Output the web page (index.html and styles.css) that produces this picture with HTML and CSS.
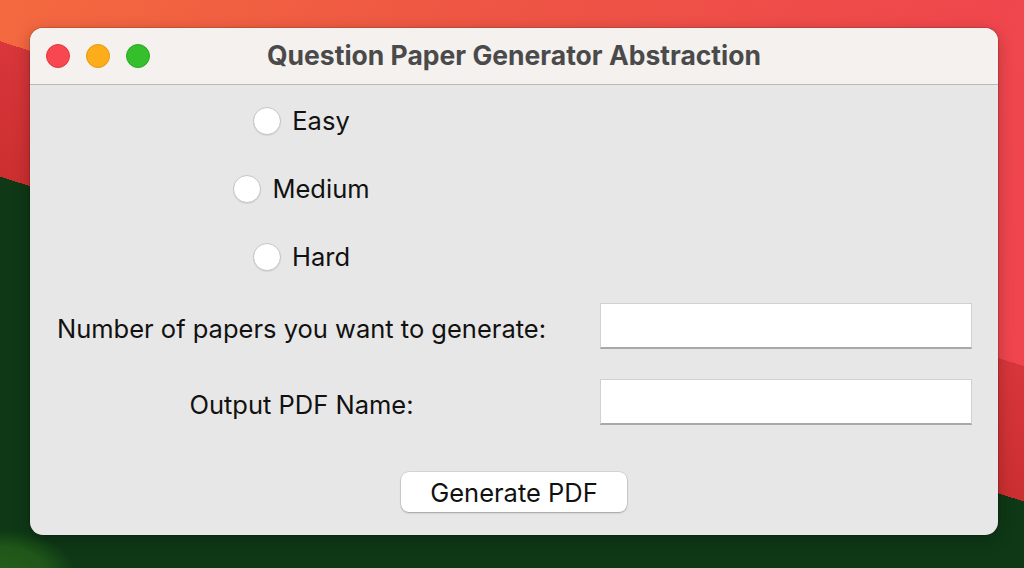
FILE: index.html
```html
<!DOCTYPE html>
<html lang="en">
<head>
<meta charset="utf-8">
<title>Question Paper Generator Abstraction</title>
<link rel="stylesheet" href="styles.css">
</head>
<body>
<div class="desktop">
  <div class="window">
    <div class="titlebar">
      <div class="lights">
        <span class="light red"></span>
        <span class="light yellow"></span>
        <span class="light green"></span>
      </div>
      <div class="title">Question Paper Generator Abstraction</div>
      <div></div>
    </div>
    <div class="content">
      <label class="radio"><span class="circle"></span><span class="rtext">Easy</span></label>
      <div></div>
      <label class="radio"><span class="circle"></span><span class="rtext">Medium</span></label>
      <div></div>
      <label class="radio"><span class="circle"></span><span class="rtext">Hard</span></label>
      <div></div>
      <div class="label">Number of papers you want to generate:</div>
      <div class="entry"></div>
      <div class="label">Output PDF Name:</div>
      <div class="entry"></div>
      <div class="btnrow"><div class="button">Generate PDF</div></div>
    </div>
  </div>
</div>
</body>
</html>
```

FILE: styles.css
```css
html, body {
  margin: 0;
  padding: 0;
}
body {
  width: 1024px;
  height: 568px;
  overflow: hidden;
  font-family: Inter, "Liberation Sans", Arial, sans-serif;
  background:
    radial-gradient(ellipse 75px 42px at 0 572px, #245e1c 0%, #205619 60%, rgba(32,86,25,0) 100%),
    linear-gradient(197.6deg, rgba(0,0,0,0) 0 478px, #0e3816 478px 100%),
    linear-gradient(197.6deg, rgba(0,0,0,0) 0 349px, #d8363a 349px, #cc2f30 478px),
    linear-gradient(100deg, #f4693f 0%, #ee5544 45%, #f0434f 100%);
}
.desktop {
  padding: 28px 0 0 30px;
}
.window {
  width: 968px;
  height: 507px;
  border-radius: 13px;
  overflow: hidden;
  background: #e7e7e7;
  box-shadow: 0 0 0 1px rgba(0,0,0,0.12), 0 4px 16px rgba(0,0,0,0.25);
}
.titlebar {
  height: 56px;
  background: #f4f1ef;
  border-bottom: 1px solid #bcbab9;
  display: grid;
  grid-template-columns: 1fr auto 1fr;
  align-items: center;
}
.lights {
  display: flex;
  gap: 16px;
  padding-left: 16px;
}
.light {
  width: 22px;
  height: 22px;
  border-radius: 50%;
  display: block;
}
.light.red { background: #f9474f; border: 1px solid #e2383f; }
.light.yellow { background: #fcad19; border: 1px solid #e39a12; }
.light.green { background: #36bf2c; border: 1px solid #29a821; }
.title {
  font-weight: bold;
  font-size: 26.5px;
  color: #4b4a4a;
  padding-bottom: 2px;
}
.content {
  padding-top: 2px;
  display: grid;
  grid-template-columns: 543px 1fr;
  grid-template-rows: 68px 68px 68px 70px 82px auto;
  align-items: center;
}
.radio {
  justify-self: center;
  display: flex;
  align-items: center;
  gap: 11px;
  font-size: 25.5px;
  color: #111;
}
.rtext {
  padding-bottom: 1px;
}
.circle {
  width: 26px;
  height: 26px;
  border-radius: 50%;
  background: #fff;
  border: 1px solid #c4c4c4;
  box-shadow: 0 1px 1px rgba(0,0,0,0.08);
  display: block;
}
.label {
  justify-self: center;
  font-size: 25.5px;
  color: #111;
  padding-top: 4px;
}
.entry {
  justify-self: center;
  width: 372px;
  height: 46px;
  background: #fff;
  box-sizing: border-box;
  border: 1px solid #d0d0d0;
  border-bottom: 2px solid #a8a8a8;
}
.btnrow {
  grid-column: 1 / -1;
  display: flex;
  justify-content: center;
  padding-top: 29px;
}
.button {
  width: 226px;
  height: 40px;
  box-sizing: border-box;
  background: #fff;
  border-radius: 8px;
  box-shadow: 0 0 0 0.5px rgba(0,0,0,0.15), 0 1px 2px rgba(0,0,0,0.25);
  font-size: 25.5px;
  color: #111;
  display: flex;
  align-items: center;
  justify-content: center;
}
```
